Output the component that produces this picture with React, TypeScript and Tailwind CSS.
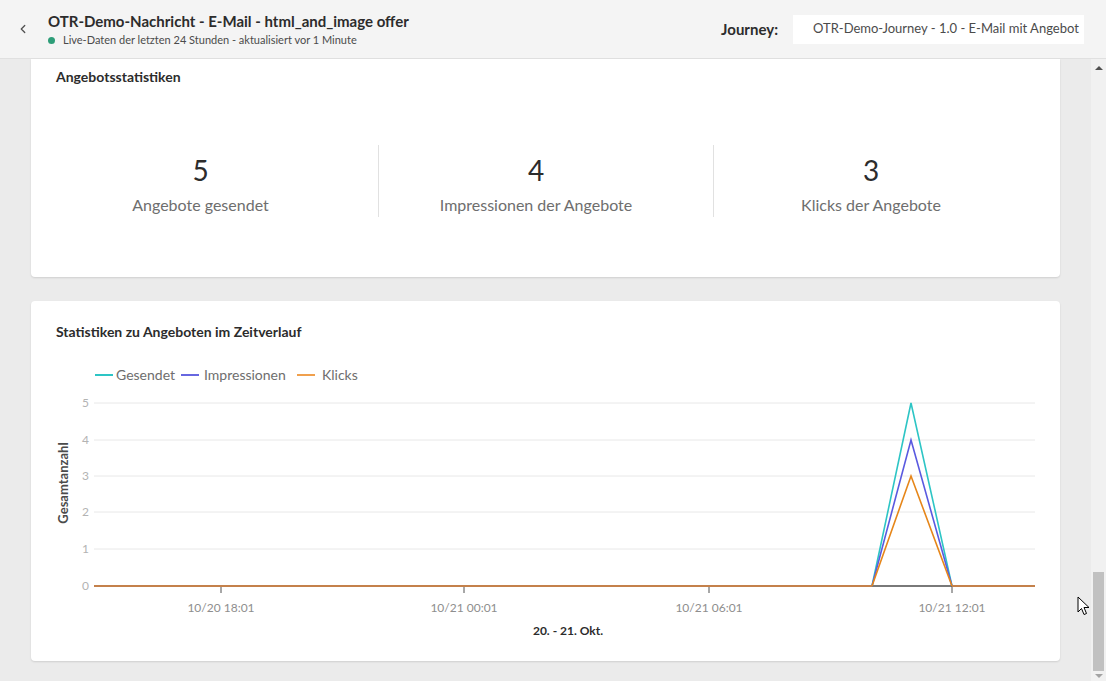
import { ChevronLeft } from 'lucide-react';

const font = { fontFamily: 'Lato, "Open Sans", sans-serif' };

type Stat = { value: string; label: string };

const stats: Stat[] = [
  { value: '5', label: 'Angebote gesendet' },
  { value: '4', label: 'Impressionen der Angebote' },
  { value: '3', label: 'Klicks der Angebote' },
];

const StatsCard = () => (
  <div className="bg-white rounded-b-[4px] shadow-[0_1px_2px_rgba(0,0,0,0.12)] pt-[9px] pb-[60px] px-[12px]">
    <h3 className="text-[14px] font-bold text-[#2c2c2c] leading-[18px] pl-[13px]">Angebotsstatistiken</h3>
    <div className="flex mt-[59px]">
      {stats.map((s, i) => (
        <div
          key={s.label}
          className={`w-[335px] h-[72px] flex flex-col items-center justify-center pr-[20px] pt-[8px] ${
            i > 0 ? 'border-l border-[#e1e1e1]' : ''
          }`}
        >
          <div className="text-[28px] leading-[32px] text-[#2c2c2c]">{s.value}</div>
          <div className="text-[16px] leading-[22px] text-[#6e6e6e] mt-[8px]">{s.label}</div>
        </div>
      ))}
    </div>
  </div>
);

const grid = [48, 85, 121, 157, 194, 231];
const ticks = [
  { x: 190, label: '10/20 18:01' },
  { x: 433, label: '10/21 00:01' },
  { x: 678, label: '10/21 06:01' },
  { x: 921, label: '10/21 12:01' },
];

const Chart = () => (
  <svg width="1029" height="290" className="block" style={font}>
    {/* legend */}
    <line x1="64" y1="20" x2="82" y2="20" stroke="#2dc5c5" strokeWidth="2" />
    <text x="85" y="25" fontSize="14" fill="#6e6e6e">Gesendet</text>
    <line x1="150" y1="20" x2="168" y2="20" stroke="#6767e0" strokeWidth="2" />
    <text x="173" y="25" fontSize="14" fill="#6e6e6e">Impressionen</text>
    <line x1="266" y1="20" x2="284" y2="20" stroke="#f0a04d" strokeWidth="2" />
    <text x="291" y="25" fontSize="14" fill="#6e6e6e">Klicks</text>

    {/* grid */}
    {grid.map((y, i) => (
      <g key={y}>
        <line x1="63" y1={y} x2="1004" y2={y} stroke="#e8e8e8" strokeWidth="1" />
        <text x="58" y={y + 4} fontSize="12" fill="#b3b3b3" textAnchor="end">
          {5 - i}
        </text>
      </g>
    ))}

    <text x="37" y="128" fontSize="13" fontWeight="700" fill="#4b4b4b" textAnchor="middle" transform="rotate(-90 37 128)">
      Gesamtanzahl
    </text>

    {/* axis */}
    <line x1="63" y1="231" x2="1004" y2="231" stroke="#505050" strokeWidth="1.5" />
    {ticks.map((t) => (
      <g key={t.x}>
        <line x1={t.x} y1="231" x2={t.x} y2="238" stroke="#505050" strokeWidth="1" />
        <text x={t.x} y="257" fontSize="12" fill="#8e8e8e" textAnchor="middle">
          {t.label}
        </text>
      </g>
    ))}
    <text x="537" y="280" fontSize="12" fontWeight="700" fill="#2c2c2c" textAnchor="middle">
      20. - 21. Okt.
    </text>

    {/* data */}
    <polyline points="841,231 880,48 921,231" fill="none" stroke="#2dc5c5" strokeWidth="1.6" />
    <polyline points="841,231 880,85 921,231" fill="none" stroke="#5a5ae0" strokeWidth="1.6" />
    <polyline points="841,231 880,121 921,231" fill="none" stroke="#e68619" strokeWidth="1.6" />
    <line x1="63" y1="231" x2="841" y2="231" stroke="#c4814b" strokeWidth="2" />
    <line x1="921" y1="231" x2="1004" y2="231" stroke="#c4814b" strokeWidth="2" />
  </svg>
);

const ChartCard = () => (
  <div className="bg-white rounded-[4px] shadow-[0_1px_2px_rgba(0,0,0,0.12)] h-[360px] mt-[24px] pt-[22px]">
    <h3 className="text-[14px] font-bold text-[#2c2c2c] leading-[18px] pl-[25px]">
      Statistiken zu Angeboten im Zeitverlauf
    </h3>
    <div className="mt-[14px]">
      <Chart />
    </div>
  </div>
);

export default function App() {
  return (
    <div className="w-[1106px] h-[681px] overflow-hidden flex flex-col bg-[#ebebeb]" style={font}>
      {/* header */}
      <header className="h-[59px] shrink-0 bg-[#f4f4f4] border-b border-[#e0e0e0] flex items-center pr-[22px]">
        <ChevronLeft className="ml-[16px] w-[14px] h-[14px] text-[#505050]" strokeWidth={2.2} />
        <div className="ml-[18px] flex flex-col">
          <div className="text-[15px] font-bold text-[#2c2c2c] leading-[20px]">
            OTR-Demo-Nachricht - E-Mail - html_and_image offer
          </div>
          <div className="flex items-center mt-[2px]">
            <span className="w-[7px] h-[7px] rounded-full bg-[#2d9d78]" />
            <span className="ml-[8px] text-[11px] text-[#4b4b4b] leading-[14px]">
              Live-Daten der letzten 24 Stunden - aktualisiert vor 1 Minute
            </span>
          </div>
        </div>
        <div className="ml-auto flex items-center">
          <span className="text-[15px] font-bold text-[#2c2c2c]">Journey:</span>
          <div className="ml-[15px] bg-white h-[29px] w-[291px] pl-[20px] flex items-center text-[13px] text-[#4b4b4b]">
            OTR-Demo-Journey - 1.0 - E-Mail mit Angebot
          </div>
        </div>
      </header>

      <div className="flex flex-1 min-h-0 relative">
        <main className="flex-1 px-[31px]">
          <StatsCard />
          <ChartCard />
        </main>
        {/* scrollbar */}
        <div className="w-[15px] bg-[#f1f1f1] flex flex-col items-center">
          <div className="mt-[7px] w-0 h-0 border-l-[4px] border-r-[4px] border-b-[4px] border-l-transparent border-r-transparent border-b-[#505050]" />
          <div className="flex-1" />
          <div className="w-[11px] h-[99px] bg-[#c1c1c1]" />
          <div className="my-[3px] w-0 h-0 border-l-[4px] border-r-[4px] border-t-[4px] border-l-transparent border-r-transparent border-t-[#a3a3a3]" />
        </div>
        {/* mouse cursor */}
        <svg className="absolute left-[1077px] top-[537px]" width="14" height="21" viewBox="0 0 14 21">
          <path d="M1 1 L1 16 L4.5 12.5 L7 18.5 L9.5 17.5 L7 11.5 L12 11.5 Z" fill="white" stroke="black" strokeWidth="1" />
        </svg>
      </div>
    </div>
  );
}
